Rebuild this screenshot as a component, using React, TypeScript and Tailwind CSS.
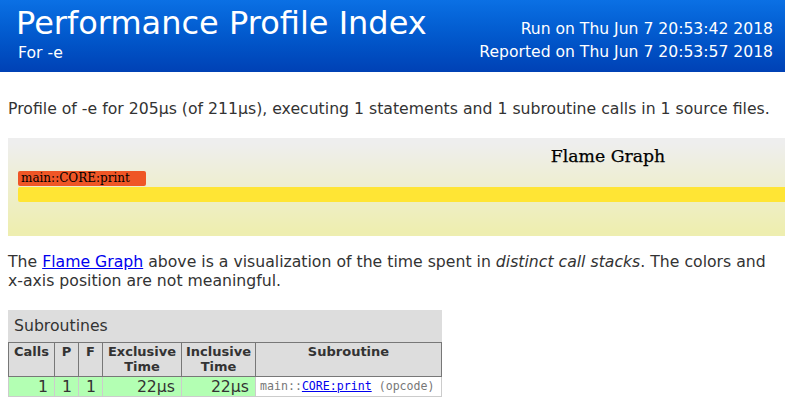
import React from "react";

export default function App() {
  return (
    <div className="w-[785px] h-[408px] overflow-hidden bg-white text-[#333]" style={{ fontFamily: '"DejaVu Sans", Verdana, sans-serif' }}>
      <div className="h-[72px] bg-gradient-to-b from-[#0b70e4] to-[#0041b5] flex justify-between text-white">
        <div className="pl-[16px] pt-[5px]">
          <div className="text-[32px] leading-[36px]">Performance Profile Index</div>
          <div className="text-[15.7px] leading-[23px] pl-[2px]">For -e</div>
        </div>
        <div className="pr-[12px] pt-[18px] text-right text-[15.6px] leading-[23px]">
          <div>Run on Thu Jun 7 20:53:42 2018</div>
          <div>Reported on Thu Jun 7 20:53:57 2018</div>
        </div>
      </div>

      <p className="mt-[27px] ml-[8px] text-[15.7px] leading-[19px] whitespace-nowrap">
        Profile of -e for 205µs (of 211µs), executing 1 statements and 1 subroutine calls in 1 source files.
      </p>

      <div className="mt-[20px] ml-[8px] w-[1200px] h-[98px]">
        <svg width="1200" height="98" viewBox="0 0 1200 98" style={{ display: "block" }}>
          <defs>
            <linearGradient id="bg" x1="0" y1="0" x2="0" y2="1">
              <stop offset="5%" stopColor="#eeeeee" />
              <stop offset="95%" stopColor="#eeeeb0" />
            </linearGradient>
          </defs>
          <rect x="0" y="0" width="1200" height="98" fill="url(#bg)" />
          <text x="600" y="24" textAnchor="middle" fontSize="17.3" fontFamily="'DejaVu Serif', serif" fill="#000" stroke="#000" strokeWidth="0.25">
            Flame Graph
          </text>
          <rect x="10" y="33" width="128" height="15" rx="2" ry="2" fill="rgb(239,86,38)" />
          <text x="13" y="43.5" fontSize="12" fontFamily="'DejaVu Serif', serif" fill="#000">
            main::CORE:print
          </text>
          <rect x="10" y="49" width="1180" height="15" rx="2" ry="2" fill="rgb(255,229,52)" />
        </svg>
      </div>

      <p className="mt-[16px] ml-[8px] text-[15.7px] leading-[19px]">
        The <a href="#" className="text-[#0000ee] underline">Flame Graph</a> above is a visualization of the time spent in <i>distinct call stacks</i>. The colors and
        <br />
        x-axis position are not meaningful.
      </p>

      <table className="mt-[20px] ml-[8px] border-collapse table-fixed w-[433px]">
        <caption className="bg-[#dddddd] text-left text-[15.7px] leading-[32px] pl-[6px]">Subroutines</caption>
        <colgroup>
          <col className="w-[46px]" />
          <col className="w-[24px]" />
          <col className="w-[24px]" />
          <col className="w-[79px]" />
          <col className="w-[74px]" />
          <col className="w-[186px]" />
        </colgroup>
        <thead>
          <tr className="bg-[#dddddd] text-[13px] leading-[15px] font-bold align-top">
            <th className="border border-[#777] px-0 pt-[1px] pb-[2px]">Calls</th>
            <th className="border border-[#777] px-0 pt-[1px] pb-[2px]">P</th>
            <th className="border border-[#777] px-0 pt-[1px] pb-[2px]">F</th>
            <th className="border border-[#777] px-0 pt-[1px] pb-[2px]">Exclusive<br />Time</th>
            <th className="border border-[#777] px-0 pt-[1px] pb-[2px]">Inclusive<br />Time</th>
            <th className="border border-[#777] px-0 pt-[1px] pb-[2px]">Subroutine</th>
          </tr>
        </thead>
        <tbody>
          <tr className="text-[15.7px] leading-[19px]">
            <td className="border border-[#cccccc] bg-[#b3ffb3] text-right pr-[6px]">1</td>
            <td className="border border-[#cccccc] bg-[#b3ffb3] text-right pr-[6px]">1</td>
            <td className="border border-[#cccccc] bg-[#b3ffb3] text-right pr-[6px]">1</td>
            <td className="border border-[#cccccc] bg-[#b3ffb3] text-right pr-[6px]">22µs</td>
            <td className="border border-[#cccccc] bg-[#b3ffb3] text-right pr-[6px]">22µs</td>
            <td
              className="border border-[#cccccc] bg-white pl-[4px] text-[11.6px] text-[#777] whitespace-nowrap align-top"
              style={{ fontFamily: '"DejaVu Sans Mono", monospace' }}
            >
              main::<a href="#" className="text-[#0000ee] underline">CORE:print</a> (opcode)
            </td>
          </tr>
        </tbody>
      </table>
    </div>
  );
}
